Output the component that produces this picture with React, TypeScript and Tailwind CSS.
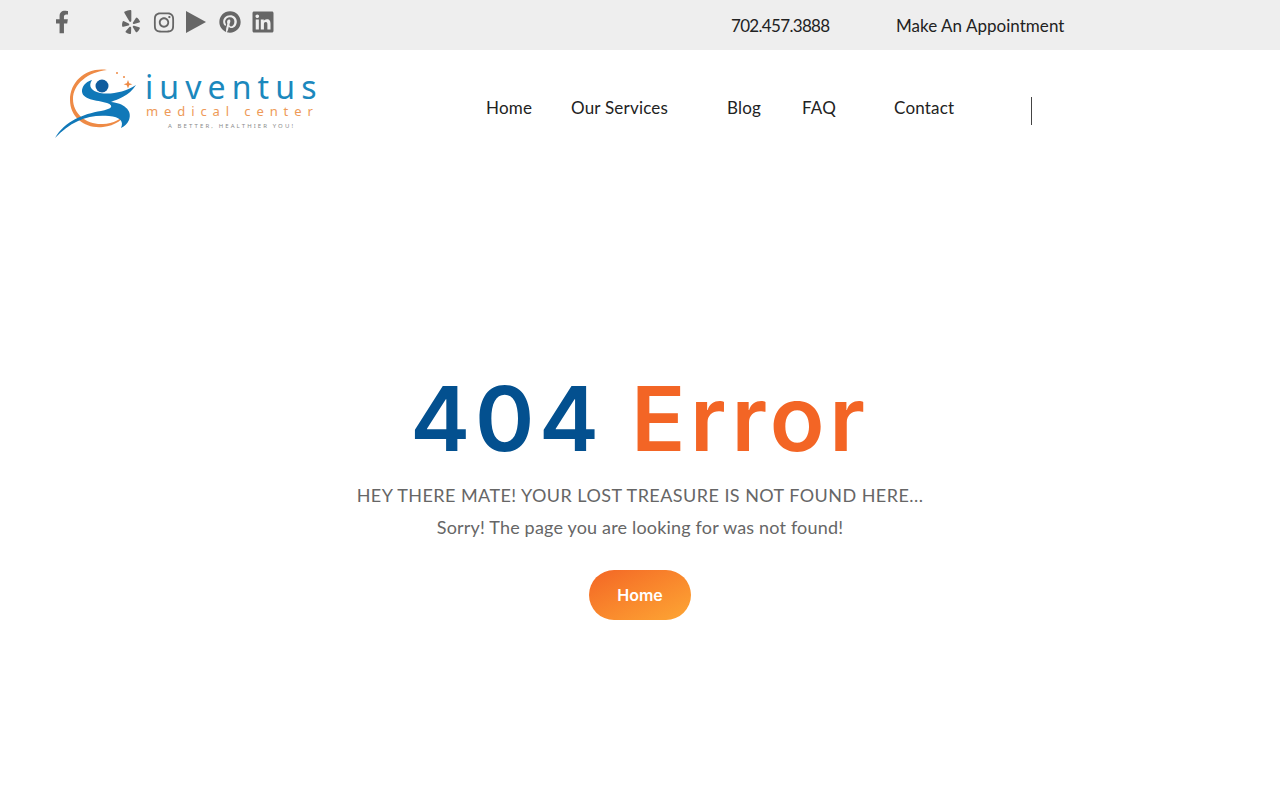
import React from 'react';
import { FaFacebookF, FaYelp, FaInstagram, FaPinterest, FaLinkedin } from 'react-icons/fa';

const font = "font-['Lato','Noto_Sans',sans-serif]";

const Logo = () => (
  <div className="relative w-[262px] h-[70px] shrink-0">
    <svg width="82" height="70" viewBox="0 0 82 70" className="absolute left-0 top-[1px]">
      {/* orange ring */}
      <path d="M52 1C32 -2 15 12 15 31C15 49 31 60 48 58C60 57 69 50 73 42C67 50 58 55 48 55C32 56 18 45 18 30C18 15 33 3 52 1Z" fill="#ee8a45" />
      {/* body swoosh */}
      <path d="M0 69C10 52 28 45 46 42C56 40 60 37 52 34C42 31 26 31 27 21C28 15 33 12 37 11C33 17 36 22 45 24C56 26 70 23 81 16C74 27 63 30 56 33C68 34 78 41 74 51C72 55 70 57 66 59C69 52 65 48 54 47C34 45 16 52 0 69Z" fill="#1078b8" />
      <circle cx="47" cy="17" r="6.5" fill="#0f5c9e" />
      <path d="M73 11l1.2 3.2 3.2 1-3.2 1-1.2 3.2-1.2-3.2-3.2-1 3.2-1z" fill="#ee8a45" />
      <circle cx="62" cy="4" r="1" fill="#ee8a45" />
      <circle cx="69" cy="8" r="1" fill="#ee8a45" />
    </svg>
    <div className="absolute left-[90px] top-[4px] text-[32px] leading-[30px] tracking-[6.1px] text-[#1b88bd] font-['Noto_Sans',sans-serif] whitespace-nowrap">
      iuventus
    </div>
    <div className="absolute left-[91px] top-[36px] text-[13px] leading-[14px] tracking-[5.9px] text-[#ee9a58] font-['Noto_Sans',sans-serif] whitespace-nowrap">
      medical center
    </div>
    <div className="absolute left-[113px] top-[54px] text-[6px] leading-[8px] tracking-[2.1px] text-[#8b8b8b] font-['Noto_Sans',sans-serif] whitespace-nowrap">
      A BETTER, HEALTHIER YOU!
    </div>
  </div>
);

const TopBar = () => (
  <div className={`h-[50px] bg-[#eeeeee] flex pl-[55px] ${font}`}>
    <div className="flex items-start pt-[10px] text-[#666666]">
      <FaFacebookF className="w-[14px] h-[24px] mr-[52px]" />
      <FaYelp className="w-[20px] h-[24px] mr-[12px]" />
      <FaInstagram className="w-[22px] h-[23px] mr-[11px] mt-[1px]" />
      <svg width="20" height="22" viewBox="0 0 20 22" className="mr-[13px] mt-[1px]" fill="currentColor">
        <path d="M0 0L20 11L0 22Z" />
      </svg>
      <FaPinterest className="w-[22px] h-[22px] mr-[11px] mt-[1px]" />
      <FaLinkedin className="w-[22px] h-[24px]" />
    </div>
    <div className="flex ml-[457px] pt-[16px] text-[17px] leading-[20px] text-[#222222]">
      <span className="w-[165px] tracking-[-0.04em]">702.457.3888</span>
      <span className="tracking-[0.002em]">Make An Appointment</span>
    </div>
  </div>
);

const Nav = () => (
  <div className="h-[100px] flex pl-[55px] pt-[18px]">
    <Logo />
    <nav className={`flex ml-[169px] pt-[30px] text-[17px] leading-[20px] tracking-[0.012em] text-[#222222] ${font}`}>
      <a className="w-[85px]">Home</a>
      <a className="w-[156px]">Our Services</a>
      <a className="w-[75px]">Blog</a>
      <a className="w-[92px]">FAQ</a>
      <a className="w-[137px]">Contact</a>
      <span className="w-px h-[28px] -mt-[1px] bg-[#444444]" />
    </nav>
  </div>
);

export default function App() {
  return (
    <div className="min-h-[800px] bg-white overflow-hidden">
      <TopBar />
      <Nav />
      <main className="flex flex-col items-center pt-[211px]">
        <h1 className="text-[90px] leading-[116px] font-semibold tracking-[0.052em] whitespace-nowrap font-['Inter',sans-serif]">
          <span className="text-[#03508f]">404</span> <span className="text-[#f36525]">Error</span>
        </h1>
        <p className={`mt-[7px] text-[18px] leading-[22px] tracking-[0.025em] text-[#666666] ${font}`}>
          HEY THERE MATE! YOUR LOST TREASURE IS NOT FOUND HERE...
        </p>
        <p className={`mt-[10px] text-[18px] leading-[22px] tracking-[0.01em] text-[#666666] ${font}`}>
          Sorry! The page you are looking for was not found!
        </p>
        <a className="mt-[32px] w-[102px] h-[50px] rounded-[25px] flex items-center justify-center text-white text-[16px] font-semibold bg-gradient-to-br from-[#f36525] to-[#fda634] font-['Inter',sans-serif]">
          Home
        </a>
      </main>
    </div>
  );
}
